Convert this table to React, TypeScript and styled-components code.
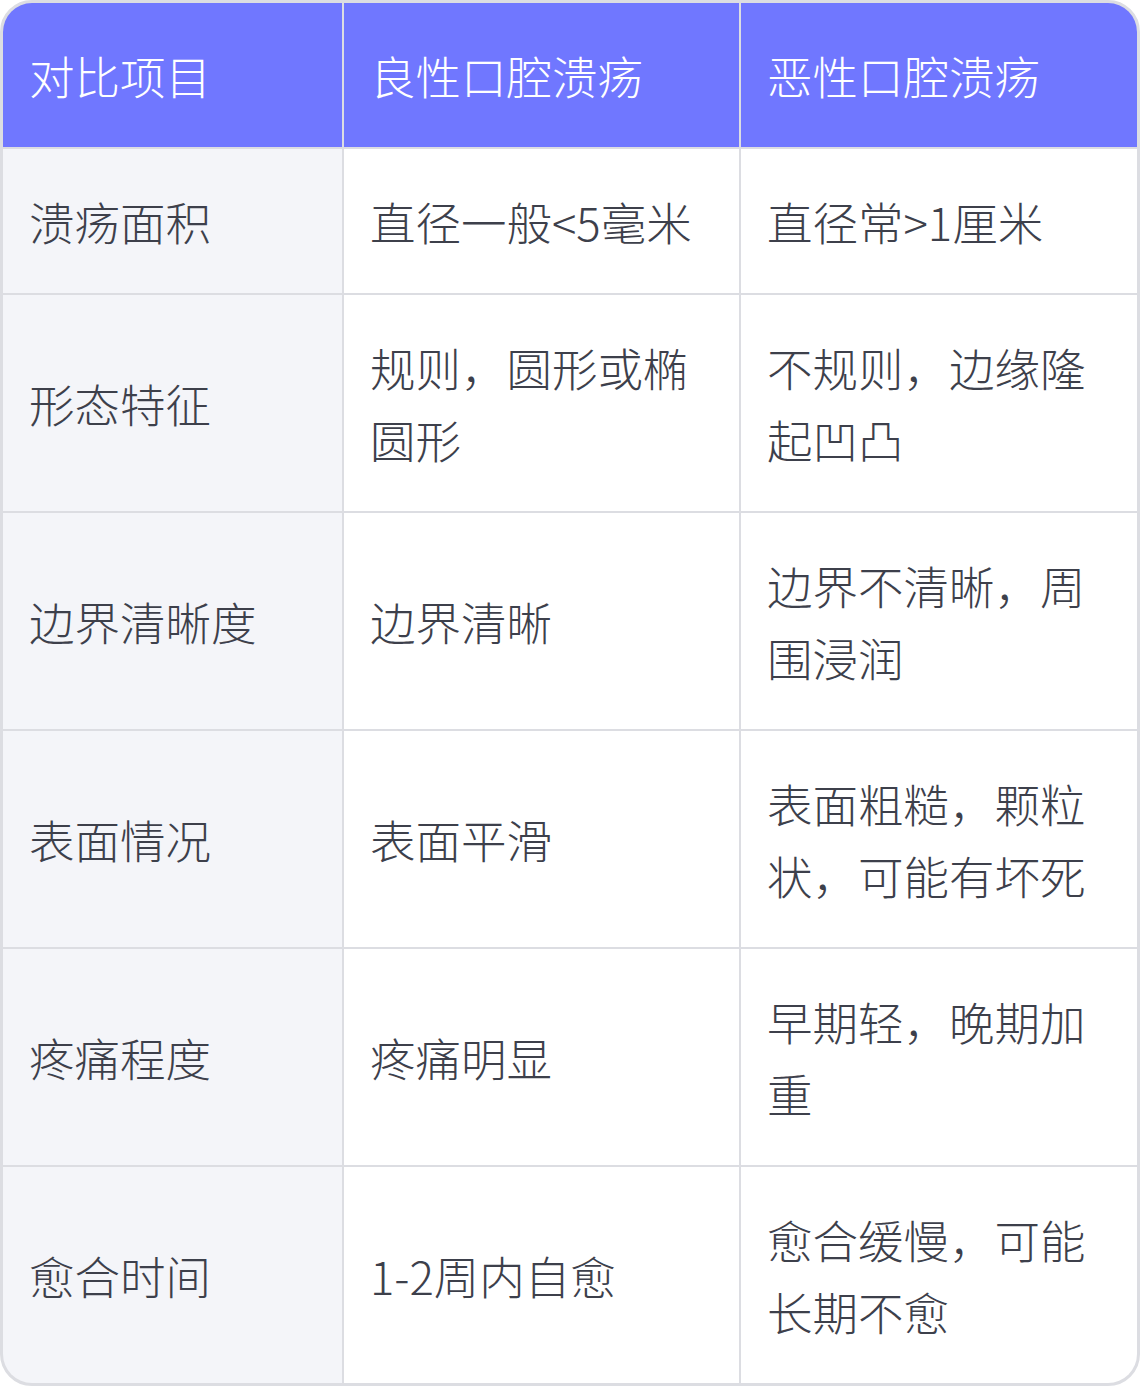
import styled, { createGlobalStyle } from 'styled-components';

const GlobalStyle = createGlobalStyle`
  html, body {
    margin: 0;
    padding: 0;
    background: #ffffff;
  }
  body {
    font-family: "Noto Sans CJK SC", "Noto Sans", sans-serif;
  }
`;

type Row = {
  item: string;
  benign: string;
  malignant: string;
};

const headers = ['对比项目', '良性口腔溃疡', '恶性口腔溃疡'];

const rows: Row[] = [
  { item: '溃疡面积', benign: '直径一般<5毫米', malignant: '直径常>1厘米' },
  { item: '形态特征', benign: '规则，圆形或椭圆形', malignant: '不规则，边缘隆起凹凸' },
  { item: '边界清晰度', benign: '边界清晰', malignant: '边界不清晰，周围浸润' },
  { item: '表面情况', benign: '表面平滑', malignant: '表面粗糙，颗粒状，可能有坏死' },
  { item: '疼痛程度', benign: '疼痛明显', malignant: '早期轻，晚期加重' },
  { item: '愈合时间', benign: '1-2周内自愈', malignant: '愈合缓慢，可能长期不愈' },
];

const App = () => {
  return (
    <>
      <GlobalStyle />
      <TableWrap>
        {headers.map((h) => (
          <HeadCell key={h}>{h}</HeadCell>
        ))}
        {rows.flatMap((r) => [
          <Cell key={r.item + '-a'} first>
            {r.item}
          </Cell>,
          <Cell key={r.item + '-b'}>{r.benign}</Cell>,
          <Cell key={r.item + '-c'}>{r.malignant}</Cell>,
        ])}
      </TableWrap>
    </>
  );
};

export default App;

const TableWrap = styled.div`
  display: grid;
  grid-template-columns: 339px 395px 396px;
  gap: 2px;
  width: 1140px;
  box-sizing: border-box;
  border: 3px solid #dcdde2;
  border-radius: 32px;
  overflow: hidden;
  background: #dcdde2;
`;

const HeadCell = styled.div`
  display: flex;
  align-items: center;
  padding: 36px 26px;
  background: #7077ff;
  color: #ffffff;
  font-size: 45.5px;
  font-weight: 300;
  line-height: 72px;
`;

const Cell = styled.div<{ first?: boolean }>`
  display: flex;
  align-items: center;
  padding: 36px 26px;
  background: ${({ first }) => (first ? '#f4f5f9' : '#ffffff')};
  color: #3d404b;
  font-size: 45.5px;
  font-weight: 300;
  line-height: 72px;
  word-break: break-all;
`;
